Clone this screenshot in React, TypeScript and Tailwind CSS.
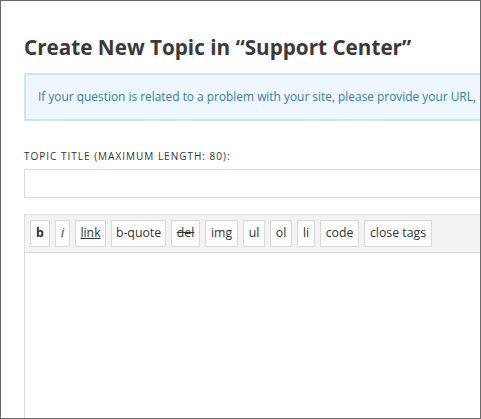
const buttons: { label: string; w: string; cls?: string }[] = [
  { label: 'b', w: 'w-[20px]', cls: 'font-bold' },
  { label: 'i', w: 'w-[15px]', cls: 'italic' },
  { label: 'link', w: 'w-[31px]', cls: 'underline' },
  { label: 'b-quote', w: 'w-[55px]' },
  { label: 'del', w: 'w-[29px]', cls: 'line-through' },
  { label: 'img', w: 'w-[33px]' },
  { label: 'ul', w: 'w-[22px]' },
  { label: 'ol', w: 'w-[22px]' },
  { label: 'li', w: 'w-[18px]' },
  { label: 'code', w: 'w-[39px]' },
  { label: 'close tags', w: 'w-[68px]' },
]

export default function App() {
  return (
    <div className="w-[481px] h-[419px] border border-[#6a6a6a] overflow-hidden bg-white font-['Open_Sans',sans-serif] text-[#333]">
      <div className="w-[600px] pl-[23px] pt-[32px]">
        <h1 className="text-[20.7px] leading-[28px] font-bold text-[#3a3a3a]">
          Create New Topic in “Support Center”
        </h1>

        {/* notice */}
        <div className="mt-[12px] h-[48px] border-2 border-[#d0e4f1] bg-[#eef7fd] pl-[12px] flex items-center">
          <p className="text-[11.9px] text-[#34809f] whitespace-nowrap">
            If your question is related to a problem with your site, please provide your URL,
          </p>
        </div>

        <label className="block mt-[28px] text-[10px] leading-[14px] tracking-[1px] uppercase text-[#333]">
          Topic Title (Maximum Length: 80):
        </label>
        <div className="mt-[6px] h-[29px] border border-[#dcdcdc] bg-white" />

        {/* editor */}
        <div className="mt-[16px] border border-[#dcdcdc]">
          <div className="h-[38px] bg-[#f3f3f3] border-b border-[#dcdcdc] flex gap-[5px] pl-[5px] pt-[5px]">
            {buttons.map(b => (
              <span
                key={b.label}
                className={`${b.w} h-[27px] bg-white border border-[#d9d9d9] flex items-center justify-center text-[12.3px] text-[#333] ${b.cls ?? ''}`}
              >
                {b.label}
              </span>
            ))}
          </div>
          <div className="h-[200px] bg-white" />
        </div>
      </div>
    </div>
  )
}
